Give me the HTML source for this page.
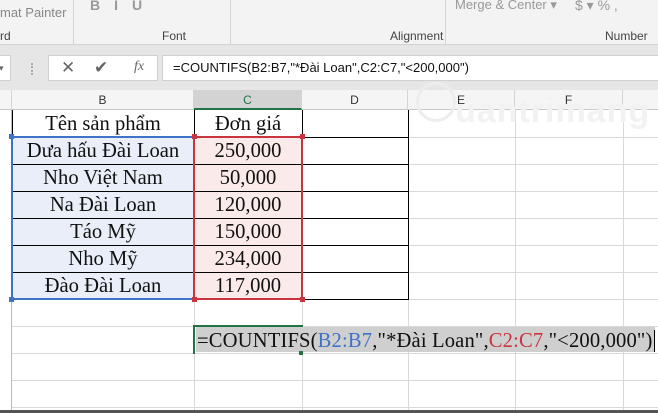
<!DOCTYPE html>
<html><head><meta charset="utf-8"><style>
*{margin:0;padding:0;box-sizing:border-box}
body{width:658px;height:413px;overflow:hidden;background:#fff;position:relative;font-family:"Liberation Sans",sans-serif}
.a{position:absolute}
.rib{left:0;top:0;width:658px;height:45px;background:#f3f3f3;border-bottom:1px solid #d4d4d4;color:#444;font-size:12px}
.fb{left:0;top:45px;width:658px;height:45px;background:#e6e6e6}
.box{background:#fff;border:1px solid #d0d0d0}
.ch{top:90px;height:20px;background:#f5f5f5;border-right:1px solid #d4d4d4;border-bottom:1px solid #c8c8c8;font-size:12px;color:#333;text-align:center;line-height:20px}
.cell{font-family:"Liberation Serif",serif;font-size:20.6px;color:#111;text-align:center;height:27px;line-height:28px}
.h{position:absolute;height:1px;background:#d9d9d9}
.v{position:absolute;width:1px;background:#d9d9d9}
.k{position:absolute;background:#000}
</style></head><body>
<div class="a rib">
 <div class="a" style="left:0;top:5px;font-size:13px;color:#888">mat Painter</div>
 <div class="a" style="left:0;top:29px">rd</div>
 <div class="a" style="left:162px;top:29px">Font</div>
 <div class="a" style="left:390px;top:29px">Alignment</div>
 <div class="a" style="left:605px;top:29px">Number</div>
 <div class="a" style="left:73px;top:0;width:1px;height:44px;background:#d4d4d4"></div>
 <div class="a" style="left:230px;top:0;width:1px;height:44px;background:#d4d4d4"></div>
 <div class="a" style="left:445px;top:0;width:1px;height:44px;background:#d4d4d4"></div>
 <div class="a" style="left:90px;top:-3px;font-size:14px;color:#999;font-weight:bold;letter-spacing:14px">BIU</div>
 <div class="a" style="left:455px;top:-3px;font-size:13px;color:#999">Merge &amp; Center ▾</div>
 <div class="a" style="left:575px;top:-3px;font-size:14px;color:#999">$ ▾ % ,</div>
</div>
<div class="a fb">
 <div class="a box" style="left:-2px;top:10px;width:13px;height:26px;font-size:9px;color:#666;line-height:24px">▾</div>
 <div class="a" style="left:31px;top:18px;width:2px;height:12px;border-left:2px dotted #aaa"></div>
 <div class="a box" style="left:48px;top:10px;width:110px;height:26px;color:#666">
  <span class="a" style="left:12px;top:2px;font-size:17px">✕</span>
  <span class="a" style="left:45px;top:2px;font-size:17px">✔</span>
  <span class="a" style="left:85px;top:3px;font-family:'Liberation Serif',serif;font-style:italic;font-size:14px">fx</span>
 </div>
 <div class="a box" style="left:162px;top:10px;width:500px;height:26px;font-size:13px;line-height:24px;padding-left:10px;color:#111">=COUNTIFS(B2:B7,"*Đài Loan",C2:C7,"&lt;200,000")</div>
</div>
<div class="a ch" style="left:0;width:12px"></div>
<div class="a ch" style="left:12px;width:182px">B</div>
<div class="a ch" style="left:194px;width:108px;background:#d3d3d3;color:#217346;border-bottom:2px solid #217346">C</div>
<div class="a ch" style="left:302px;width:106px">D</div>
<div class="a ch" style="left:408px;width:107px">E</div>
<div class="a ch" style="left:515px;width:108px">F</div>
<div class="a ch" style="left:623px;width:40px"></div>
<div class="a" style="left:11px;top:110px;width:1px;height:303px;background:#bbb"></div>
<div class="h" style="left:12px;top:326px;width:646px"></div>
<div class="h" style="left:12px;top:353px;width:646px"></div>
<div class="h" style="left:12px;top:380px;width:646px"></div>
<div class="h" style="left:12px;top:407px;width:646px"></div>
<div class="h" style="left:408px;top:137px;width:250px"></div>
<div class="h" style="left:408px;top:164px;width:250px"></div>
<div class="h" style="left:408px;top:191px;width:250px"></div>
<div class="h" style="left:408px;top:218px;width:250px"></div>
<div class="h" style="left:408px;top:245px;width:250px"></div>
<div class="h" style="left:408px;top:272px;width:250px"></div>
<div class="h" style="left:408px;top:299px;width:250px"></div>
<div class="v" style="left:194px;top:299px;height:114px"></div>
<div class="v" style="left:302px;top:299px;height:114px"></div>
<div class="v" style="left:408px;top:299px;height:114px"></div>
<div class="v" style="left:515px;top:110px;height:303px"></div>
<div class="v" style="left:623px;top:110px;height:303px"></div>
<div class="a" style="left:0;top:410px;width:658px;height:3px;background:#555"></div>
<div class="a" style="left:12px;top:137px;width:182px;height:162px;background:#e9eef8"></div>
<div class="a" style="left:194px;top:137px;width:108px;height:162px;background:#fbeaea"></div>
<div class="k" style="left:12px;top:110px;width:1px;height:190px"></div>
<div class="k" style="left:194px;top:110px;width:1px;height:190px"></div>
<div class="k" style="left:302px;top:110px;width:1px;height:190px"></div>
<div class="k" style="left:408px;top:110px;width:1px;height:190px"></div>
<div class="k" style="left:12px;top:137px;width:397px;height:1px"></div>
<div class="k" style="left:12px;top:164px;width:397px;height:1px"></div>
<div class="k" style="left:12px;top:191px;width:397px;height:1px"></div>
<div class="k" style="left:12px;top:218px;width:397px;height:1px"></div>
<div class="k" style="left:12px;top:245px;width:397px;height:1px"></div>
<div class="k" style="left:12px;top:272px;width:397px;height:1px"></div>
<div class="k" style="left:12px;top:299px;width:397px;height:1px"></div>
<div class="a cell" style="left:12px;top:110px;width:182px">Tên sản phẩm</div>
<div class="a cell" style="left:194px;top:110px;width:108px">Đơn giá</div>
<div class="a cell" style="left:12px;top:137px;width:182px">Dưa hấu Đài Loan</div>
<div class="a cell" style="left:12px;top:164px;width:182px">Nho Việt Nam</div>
<div class="a cell" style="left:12px;top:191px;width:182px">Na Đài Loan</div>
<div class="a cell" style="left:12px;top:218px;width:182px">Táo Mỹ</div>
<div class="a cell" style="left:12px;top:245px;width:182px">Nho Mỹ</div>
<div class="a cell" style="left:12px;top:272px;width:182px">Đào Đài Loan</div>
<div class="a cell" style="left:194px;top:137px;width:108px">250,000</div>
<div class="a cell" style="left:194px;top:164px;width:108px">50,000</div>
<div class="a cell" style="left:194px;top:191px;width:108px">120,000</div>
<div class="a cell" style="left:194px;top:218px;width:108px">150,000</div>
<div class="a cell" style="left:194px;top:245px;width:108px">234,000</div>
<div class="a cell" style="left:194px;top:272px;width:108px">117,000</div>
<div class="a" style="left:11px;top:136px;width:184px;height:164px;border:2px solid #3f73c8"></div>
<div class="a" style="left:193px;top:136px;width:110px;height:164px;border:2px solid #c8353f"></div>
<div class="a" style="left:9px;top:134px;width:5px;height:5px;background:#3f73c8"></div>
<div class="a" style="left:9px;top:297px;width:5px;height:5px;background:#3f73c8"></div>
<div class="a" style="left:192px;top:134px;width:5px;height:5px;background:#c8353f"></div>
<div class="a" style="left:192px;top:297px;width:5px;height:5px;background:#c8353f"></div>
<div class="a" style="left:300px;top:134px;width:5px;height:5px;background:#c8353f"></div>
<div class="a" style="left:300px;top:297px;width:5px;height:5px;background:#c8353f"></div>
<div class="a" style="left:416px;top:82px;width:40px;height:40px;border:3px solid #ededed;border-radius:50%"></div>
<div class="a" style="left:455px;top:92px;font-size:34px;font-weight:bold;color:#f2f2f2;letter-spacing:1px">uantrimang</div>
<div class="a" style="left:196px;top:327px;width:459px;height:25px;background:#cfcfcf"></div>
<div class="a" style="left:193px;top:325px;width:110px;height:29px;border:2px solid #217346;border-right:none;border-bottom:none"></div>
<div class="a" style="left:193px;top:325px;width:2px;height:29px;background:#217346"></div>
<div class="a" style="left:299px;top:351px;width:4px;height:4px;background:#217346"></div>
<div class="a" style="left:197px;top:327px;font-family:'Liberation Serif',serif;font-size:20.6px;line-height:28px;color:#111;white-space:nowrap;letter-spacing:0.15px">=COUNTIFS(<span style="color:#3f73c8">B2:B7</span>,"*Đài Loan",<span style="color:#c8353f">C2:C7</span>,"&lt;200,000")</div>
<div class="a" style="left:654px;top:330px;width:1px;height:22px;background:#000"></div>
</body></html>
